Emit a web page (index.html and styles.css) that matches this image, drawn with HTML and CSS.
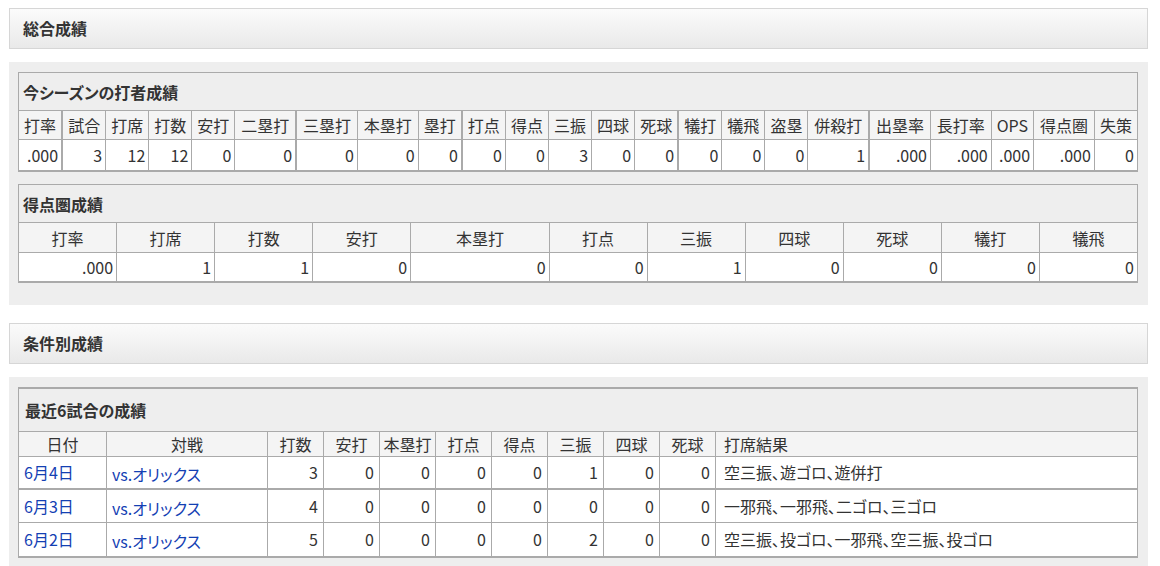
FILE: index.html
```html
<!DOCTYPE html>
<html lang="ja">
<head>
  <meta charset="UTF-8">
  <title>成績</title>
  <link rel="stylesheet" href="styles.css">
</head>
<body>
  <div class="page">

    <div class="section-head">総合成績</div>

    <div class="panel">
      <table class="stats season">
        <thead>
          <tr><th class="tbl-title" colspan="23">今シーズンの打者成績</th></tr>
          <tr>
            <th>打率</th><th class="sep">試合</th><th>打席</th><th>打数</th><th>安打</th><th>二塁打</th>
            <th class="sep">三塁打</th><th>本塁打</th><th>塁打</th>
            <th class="sep">打点</th><th>得点</th><th>三振</th><th>四球</th><th>死球</th>
            <th class="sep">犠打</th><th>犠飛</th><th>盗塁</th><th>併殺打</th>
            <th class="sep">出塁率</th><th>長打率</th><th>OPS</th><th>得点圏</th><th>失策</th>
          </tr>
        </thead>
        <tbody>
          <tr>
            <td>.000</td><td class="sep">3</td><td>12</td><td>12</td><td>0</td><td>0</td>
            <td class="sep">0</td><td>0</td><td>0</td>
            <td class="sep">0</td><td>0</td><td>3</td><td>0</td><td>0</td>
            <td class="sep">0</td><td>0</td><td>0</td><td>1</td>
            <td class="sep">.000</td><td>.000</td><td>.000</td><td>.000</td><td>0</td>
          </tr>
        </tbody>
      </table>

      <table class="stats scoring">
        <thead>
          <tr><th class="tbl-title" colspan="11">得点圏成績</th></tr>
          <tr>
            <th>打率</th><th>打席</th><th>打数</th><th>安打</th><th>本塁打</th><th>打点</th>
            <th>三振</th><th>四球</th><th>死球</th><th>犠打</th><th>犠飛</th>
          </tr>
        </thead>
        <tbody>
          <tr>
            <td>.000</td><td>1</td><td>1</td><td>0</td><td>0</td><td>0</td>
            <td>1</td><td>0</td><td>0</td><td>0</td><td>0</td>
          </tr>
        </tbody>
      </table>
    </div>

    <div class="section-head">条件別成績</div>

    <div class="panel">
      <table class="stats recent">
        <thead>
          <tr><th class="tbl-title" colspan="11">最近6試合の成績</th></tr>
          <tr>
            <th class="c-date">日付</th><th class="c-vs">対戦</th>
            <th class="c-num">打数</th><th class="c-num">安打</th><th class="c-num">本塁打</th><th class="c-num">打点</th>
            <th class="c-num">得点</th><th class="c-num">三振</th><th class="c-num">四球</th><th class="c-num">死球</th>
            <th class="c-result">打席結果</th>
          </tr>
        </thead>
        <tbody>
          <tr class="first">
            <td class="c-date"><a href="#">6月4日</a></td><td class="c-vs"><a href="#">vs.オリックス</a></td>
            <td>3</td><td>0</td><td>0</td><td>0</td><td>0</td><td>1</td><td>0</td><td>0</td>
            <td class="c-result">空三振、遊ゴロ、遊併打</td>
          </tr>
          <tr>
            <td class="c-date"><a href="#">6月3日</a></td><td class="c-vs"><a href="#">vs.オリックス</a></td>
            <td>4</td><td>0</td><td>0</td><td>0</td><td>0</td><td>0</td><td>0</td><td>0</td>
            <td class="c-result">一邪飛、一邪飛、二ゴロ、三ゴロ</td>
          </tr>
          <tr>
            <td class="c-date"><a href="#">6月2日</a></td><td class="c-vs"><a href="#">vs.オリックス</a></td>
            <td>5</td><td>0</td><td>0</td><td>0</td><td>0</td><td>2</td><td>0</td><td>0</td>
            <td class="c-result">空三振、投ゴロ、一邪飛、空三振、投ゴロ</td>
          </tr>
        </tbody>
      </table>
    </div>

  </div>
</body>
</html>
```

FILE: styles.css
```css
body {
  margin: 0;
  background: #fff;
  color: #333;
  font-family: "Noto Sans CJK JP", "Noto Sans", sans-serif;
  font-size: 16px;
  font-feature-settings: "palt";
}
.page {
  padding: 8px 12px 0 9px;
}

/* 見出しバー */
.section-head {
  height: 39px;
  line-height: 39px;
  padding: 0 13px;
  border: 1px solid #d6d6d6;
  background: linear-gradient(#fbfbfb, #e9e9e9);
  font-weight: bold;
  font-size: 16px;
}

/* グレーの枠 */
.panel {
  background: #eee;
  margin: 13px 0 18px;
  padding: 10px 10px 10px 9px;
}

/* 成績テーブル */
.stats {
  width: 100%;
  border-collapse: collapse;
  background: #fff;
  margin-bottom: 12px;
  line-height: 20px;
}
.stats th,
.stats td {
  border: 1px solid #aaa;
  padding: 0 3px;
  font-weight: normal;
  white-space: nowrap;
}
.stats th {
  background: #f4f4f4;
  text-align: center;
  height: 28px;
}
.stats td {
  text-align: right;
  height: 30px;
}
.stats tbody tr:last-child td {
  border-bottom: 2px solid #aaa;
}
.stats .tbl-title {
  background: #eee;
  text-align: left;
  padding-left: 4px;
  height: 37px;
  font-weight: bold;
  font-size: 16px;
}
.stats .sep {
  border-left: 2px solid #aaa;
}

.scoring th {
  height: 29px;
}
.scoring td {
  height: 28px;
}

/* 最近6試合 */
.recent th,
.recent td {
  box-sizing: border-box;
}
.recent .tbl-title {
  border-top: 2px solid #aaa;
  height: 43px;
  padding-left: 6px;
}
.recent th {
  height: 25px;
}
.recent td {
  height: 33px;
  padding: 0 5px;
}
.recent tbody tr:last-child td {
  height: 35px;
}
.recent tr.first td {
  border-bottom: 2px solid #aaa;
}
.recent .c-date {
  width: 88px;
  text-align: left;
}
.recent .c-vs {
  width: 161px;
  text-align: left;
}
.recent .c-num {
  width: 56px;
}
.recent .c-result {
  text-align: left;
  padding-left: 8px;
}
.recent td.c-vs a {
  position: relative;
  top: 2px;
}
.recent a {
  color: #1340b3;
  text-decoration: none;
}
.recent th.c-date,
.recent th.c-vs {
  text-align: center;
}
```
